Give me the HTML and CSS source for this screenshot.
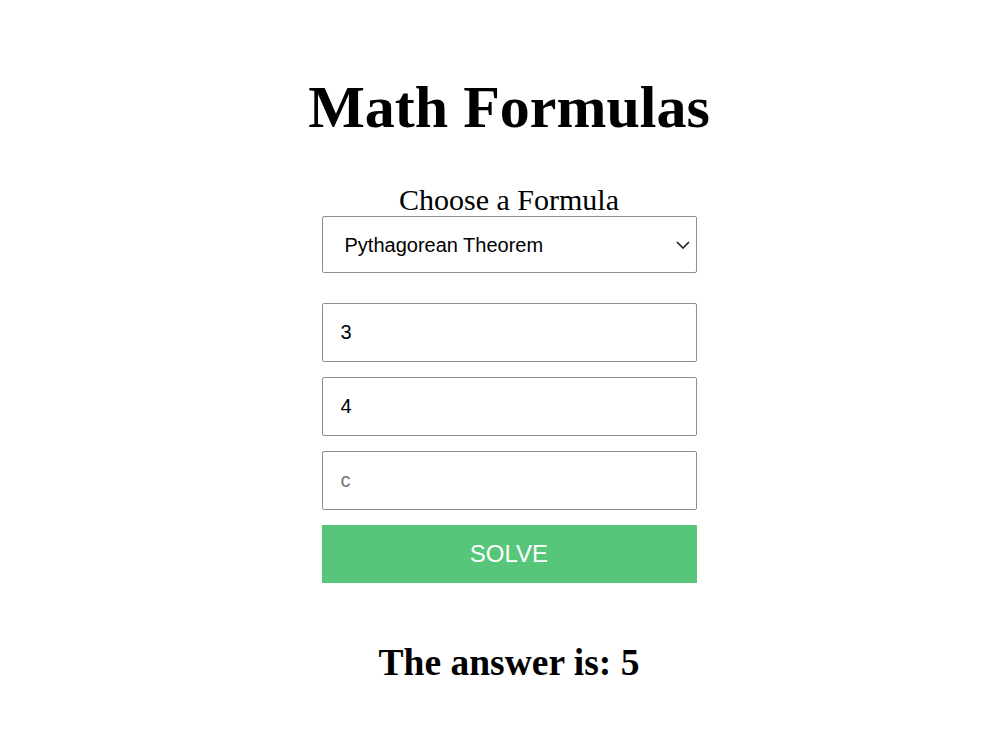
FILE: index.html
```html
<!DOCTYPE html>
<html>
<head>
<meta charset="utf-8">
<link rel="stylesheet" href="styles.css">
</head>
<body>
<div class="page">
  <h1 class="title">Math Formulas</h1>
  <form class="form">
    <label class="label" for="formula">Choose a Formula</label>
    <div class="select-wrap">
      <select id="formula" class="select">
        <option>Pythagorean Theorem</option>
      </select>
      <svg class="chevron" width="14" height="8" viewBox="0 0 14 8"><path d="M1 1 L7 7 L13 1" fill="none" stroke="#222" stroke-width="1.6"/></svg>
    </div>
    <div class="fields">
      <input class="field" type="text" value="3">
      <input class="field" type="text" value="4">
      <input class="field" type="text" placeholder="c">
      <button class="solve" type="button">SOLVE</button>
    </div>
  </form>
  <h2 class="answer">The answer is: 5</h2>
</div>
</body>
</html>
```

FILE: styles.css
```css
html, body {
  margin: 0;
  padding: 0;
  background: #fff;
}
body {
  font-family: "Liberation Serif", "Times New Roman", serif;
  color: #000;
}
.page {
  display: flex;
  flex-direction: column;
  align-items: center;
  padding-left: 18px;
}
.title {
  font-size: 60px;
  font-weight: bold;
  margin: 70px 0 0;
  line-height: 74px;
}
.form {
  width: 375px;
  display: flex;
  flex-direction: column;
  align-items: center;
  margin-top: 40px;
}
.label {
  font-size: 30px;
  line-height: 32px;
}
.select-wrap {
  position: relative;
  width: 100%;
}
.select {
  -webkit-appearance: none;
  appearance: none;
  box-sizing: border-box;
  width: 100%;
  height: 57px;
  border: 1px solid #8f8f8f;
  border-radius: 2px;
  background: #fff;
  font-family: "Liberation Sans", Arial, sans-serif;
  font-size: 20px;
  color: #000;
  padding: 0 0 0 22px;
  margin: 0;
}
.chevron {
  position: absolute;
  right: 7px;
  top: 25px;
}
.fields {
  width: 100%;
  display: flex;
  flex-direction: column;
  gap: 15px;
  margin-top: 30px;
}
.field {
  box-sizing: border-box;
  width: 100%;
  height: 59px;
  margin: 0;
  border: 1px solid #8f8f8f;
  border-radius: 2px;
  padding: 0 18px;
  font-family: "Liberation Sans", Arial, sans-serif;
  font-size: 20px;
  color: #000;
  outline: none;
}
.field::placeholder {
  color: #757575;
}
.solve {
  box-sizing: border-box;
  width: 100%;
  height: 58px;
  border: none;
  margin: 0;
  background: #57c67a;
  color: #fff;
  font-family: "Liberation Sans", Arial, sans-serif;
  font-size: 24px;
}
.answer {
  font-size: 37.5px;
  font-weight: bold;
  margin: 58px 0 0;
  line-height: 44px;
}
```
